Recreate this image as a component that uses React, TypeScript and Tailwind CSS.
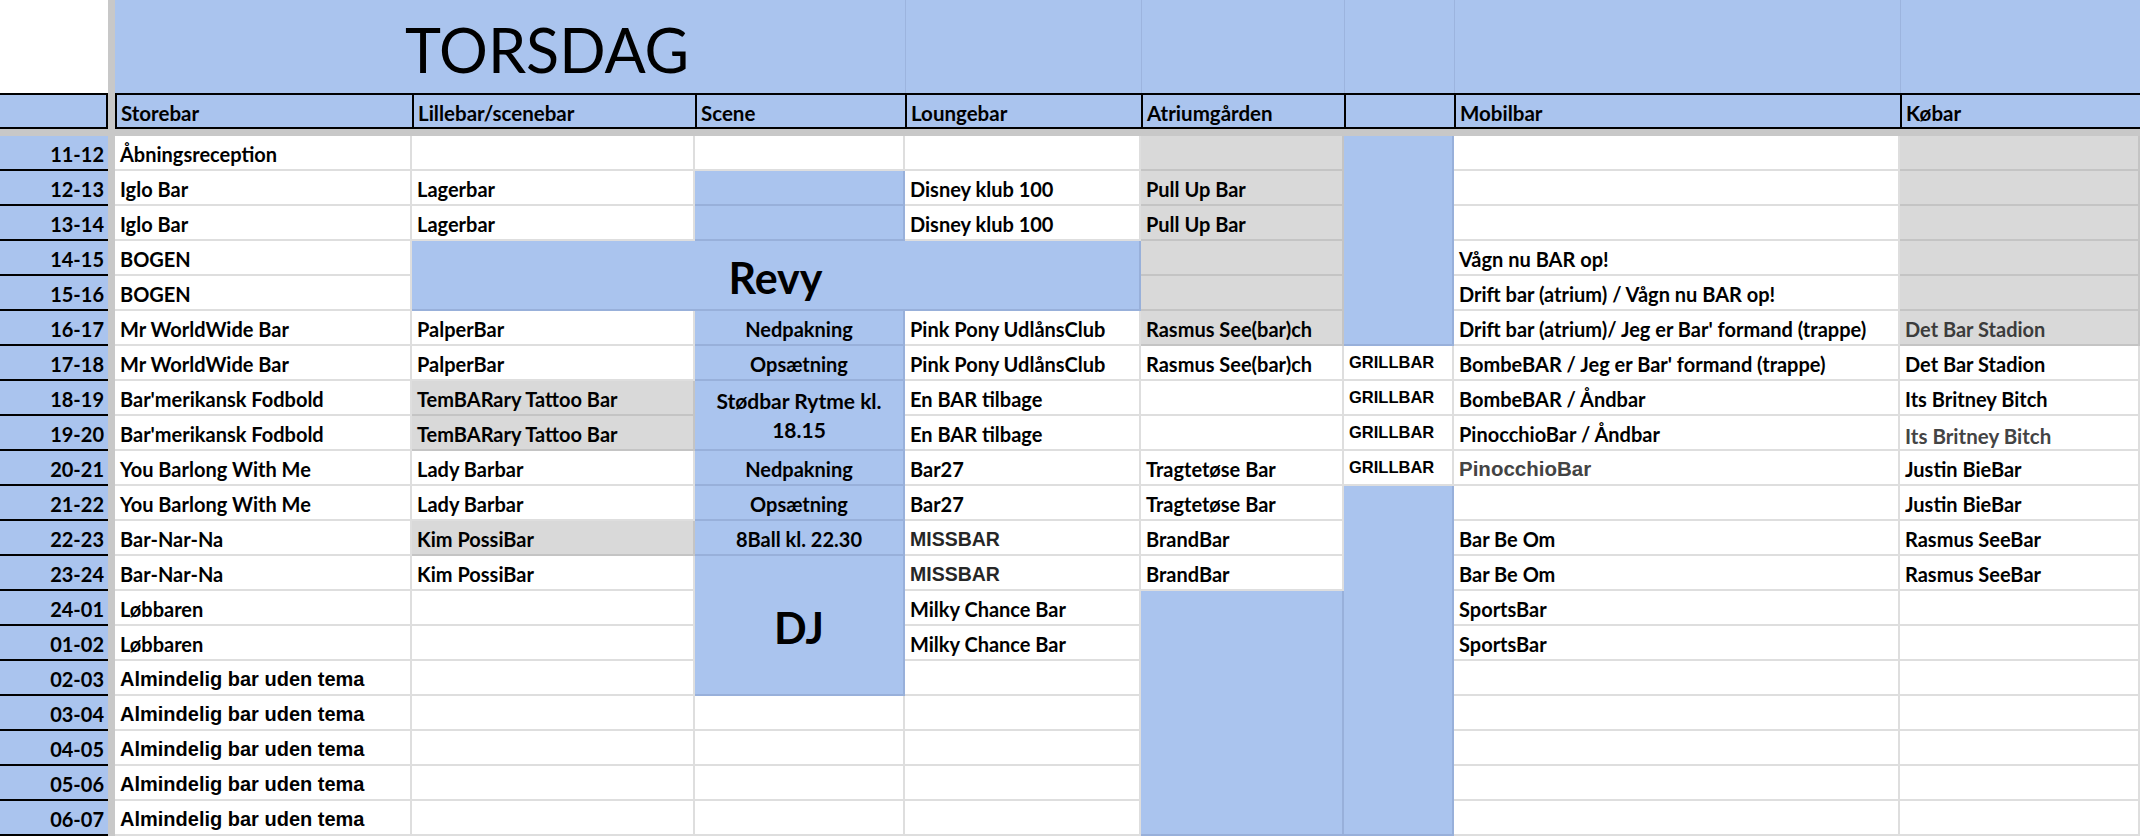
import React from 'react';

type Kind = 'n' | 'c' | 'big' | 'stod' | 'arial' | 'grill' | 'miss' | 'pin' | 'gray' | 'gray2';
type Cell = { t?: string; bg: 'w' | 'g' | 'b'; c?: 3; r?: 2 | 4 | 6 | 7 | 10; k?: Kind };

const W = (t?: string, k?: Kind): Cell => ({ t, bg: 'w', k });
const G = (t?: string, k?: Kind): Cell => ({ t, bg: 'g', k });
const B = (t?: string, k?: Kind): Cell => ({ t, bg: 'b', k });

const labels = [
  '11-12', '12-13', '13-14', '14-15', '15-16', '16-17', '17-18', '18-19', '19-20', '20-21',
  '21-22', '22-23', '23-24', '24-01', '01-02', '02-03', '03-04', '04-05', '05-06', '06-07',
];

const alm = 'Almindelig bar uden tema';

const rows: Cell[][] = [
  [W('Åbningsreception'), W(), W(), W(), G(), { bg: 'b', r: 6 }, W(), G()],
  [W('Iglo Bar'), W('Lagerbar'), B(), W('Disney klub 100'), G('Pull Up Bar'), W(), G()],
  [W('Iglo Bar'), W('Lagerbar'), B(), W('Disney klub 100'), G('Pull Up Bar'), W(), G()],
  [W('BOGEN'), { t: 'Revy', bg: 'b', c: 3, r: 2, k: 'big' }, G(), W('Vågn nu BAR op!'), G()],
  [W('BOGEN'), G(), W('Drift bar (atrium) / Vågn nu BAR op!'), G()],
  [
    W('Mr WorldWide Bar'), W('PalperBar'), B('Nedpakning', 'c'), W('Pink Pony UdlånsClub'),
    G('Rasmus See(bar)ch'), W("Drift bar (atrium)/ Jeg er Bar' formand (trappe)"), G('Det Bar Stadion', 'gray'),
  ],
  [
    W('Mr WorldWide Bar'), W('PalperBar'), B('Opsætning', 'c'), W('Pink Pony UdlånsClub'),
    W('Rasmus See(bar)ch'), W('GRILLBAR', 'grill'), W("BombeBAR / Jeg er Bar' formand (trappe)"), W('Det Bar Stadion'),
  ],
  [
    W("Bar'merikansk Fodbold"), G('TemBARary Tattoo Bar'), { t: 'Stødbar Rytme kl. 18.15', bg: 'b', r: 2, k: 'stod' },
    W('En BAR tilbage'), W(), W('GRILLBAR', 'grill'), W('BombeBAR / Åndbar'), W('Its Britney Bitch'),
  ],
  [
    W("Bar'merikansk Fodbold"), G('TemBARary Tattoo Bar'), W('En BAR tilbage'), W(),
    W('GRILLBAR', 'grill'), W('PinocchioBar / Åndbar'), W('Its Britney Bitch', 'gray2'),
  ],
  [
    W('You Barlong With Me'), W('Lady Barbar'), B('Nedpakning', 'c'), W('Bar27'), W('Tragtetøse Bar'),
    W('GRILLBAR', 'grill'), W('PinocchioBar', 'pin'), W('Justin BieBar'),
  ],
  [
    W('You Barlong With Me'), W('Lady Barbar'), B('Opsætning', 'c'), W('Bar27'), W('Tragtetøse Bar'),
    { bg: 'b', r: 10 }, W(), W('Justin BieBar'),
  ],
  [
    W('Bar-Nar-Na'), G('Kim PossiBar'), B('8Ball kl. 22.30', 'c'), W('MISSBAR', 'miss'), W('BrandBar'),
    W('Bar Be Om'), W('Rasmus SeeBar'),
  ],
  [
    W('Bar-Nar-Na'), W('Kim PossiBar'), { t: 'DJ', bg: 'b', r: 4, k: 'big' }, W('MISSBAR', 'miss'), W('BrandBar'),
    W('Bar Be Om'), W('Rasmus SeeBar'),
  ],
  [W('Løbbaren'), W(), W('Milky Chance Bar'), { bg: 'b', r: 7 }, W('SportsBar'), W()],
  [W('Løbbaren'), W(), W('Milky Chance Bar'), W('SportsBar'), W()],
  [W(alm, 'arial'), W(), W(), W(), W()],
  [W(alm, 'arial'), W(), W(), W(), W(), W()],
  [W(alm, 'arial'), W(), W(), W(), W(), W()],
  [W(alm, 'arial'), W(), W(), W(), W(), W()],
  [W(alm, 'arial'), W(), W(), W(), W(), W()],
];

const bgCls = {
  w: 'bg-white border-[#dedede]',
  g: 'bg-[#d9d9d9] border-[#c4c4c4]',
  b: 'bg-[#aac4ee] border-[#98b0da]',
};

const kindCls: Record<Kind, string> = {
  n: 'whitespace-nowrap items-center pt-[3px] text-[20px] font-bold text-black',
  c: 'whitespace-nowrap items-center justify-center pt-[3px] text-[20px] font-bold text-black',
  big: 'whitespace-nowrap items-center justify-center text-[43px] font-bold text-black pt-[6px]',
  stod: 'whitespace-normal items-center justify-center text-center text-[21px] font-bold leading-[29px] px-[12px] text-black',
  arial: "whitespace-nowrap items-end font-['Liberation_Sans',Arial,sans-serif] text-[20px] font-bold text-black",
  grill: "whitespace-nowrap items-center font-['Liberation_Sans',Arial,sans-serif] text-[16.5px] font-bold text-black",
  miss: "whitespace-nowrap items-end font-['Liberation_Sans',Arial,sans-serif] text-[19.5px] font-bold text-[#262626]",
  pin: "whitespace-nowrap items-center pt-[4px] font-['Liberation_Sans',Arial,sans-serif] text-[20.5px] font-bold text-[#444444]",
  gray: 'whitespace-nowrap items-center pt-[3px] text-[20px] font-bold text-[#3c3c3c]',
  gray2: 'whitespace-nowrap items-center pt-[7px] text-[20.5px] font-bold text-[#444444]',
};

const rowSpanCls = {
  2: 'row-span-2',
  4: 'row-span-4',
  6: 'row-span-6',
  7: 'row-span-7',
  10: 'row-span-10',
};

function DataCell({ cell }: { cell: Cell }) {
  const k = cell.k ?? 'n';
  const cls = [
    'flex min-w-0 overflow-hidden border-r-2 border-b-2 px-[5px]',
    bgCls[cell.bg],
    kindCls[k],
    cell.c === 3 ? 'col-span-3' : '',
    cell.r ? rowSpanCls[cell.r] : '',
  ].join(' ');
  return <div className={cls}>{cell.t ? <span>{cell.t}</span> : null}</div>;
}

const headers = ['Storebar', 'Lillebar/scenebar', 'Scene', 'Loungebar', 'Atriumgården', '', 'Mobilbar', 'Købar'];

export default function App() {
  return (
    <div className="w-[2140px] h-[836px] overflow-hidden bg-white font-['Lato',sans-serif] text-black">
      <div className="grid h-[836px] w-[2140px] grid-cols-[108px_7px_297px_283px_210px_236px_203px_110px_446px_240px] grid-rows-[93px_36px_7px_repeat(20,35px)]">
        {/* frozen pane dividers */}
        <div className="col-start-2 row-span-full bg-[#c8c8c8]" />
        <div className="row-start-3 col-span-full bg-[#c8c8c8]" />

        {/* title band */}
        <div className="bg-white" />
        <div className="col-span-3 flex items-start bg-[#aac4ee] pl-[290px] pt-[19px] text-[61px] font-normal leading-none">
          TORSDAG
        </div>
        <div className="border-l border-[#9cb4de] bg-[#aac4ee]" />
        <div className="border-l border-[#9cb4de] bg-[#aac4ee]" />
        <div className="border-l border-[#9cb4de] bg-[#aac4ee]" />
        <div className="border-l border-[#9cb4de] bg-[#aac4ee]" />
        <div className="border-l border-[#9cb4de] bg-[#aac4ee]" />

        {/* header row */}
        <div className="border-y-2 border-r-2 border-black bg-[#aac4ee]" />
        {headers.map((h, i) => (
          <div
            key={i}
            className="flex items-center overflow-hidden whitespace-nowrap border-y-2 border-l-2 border-black bg-[#aac4ee] px-[4px] pt-[5px] text-[20.5px] font-bold"
          >
            {h}
          </div>
        ))}

        {/* data rows */}
        {rows.map((r, ri) => (
          <React.Fragment key={ri}>
            <div className="flex items-center justify-end border-b-2 border-black bg-[#aac4ee] pr-[4px] pt-[3px] text-[20px] font-bold">
              {labels[ri]}
            </div>
            {r.map((cell, ci) => (
              <DataCell key={ci} cell={cell} />
            ))}
          </React.Fragment>
        ))}
      </div>
    </div>
  );
}
